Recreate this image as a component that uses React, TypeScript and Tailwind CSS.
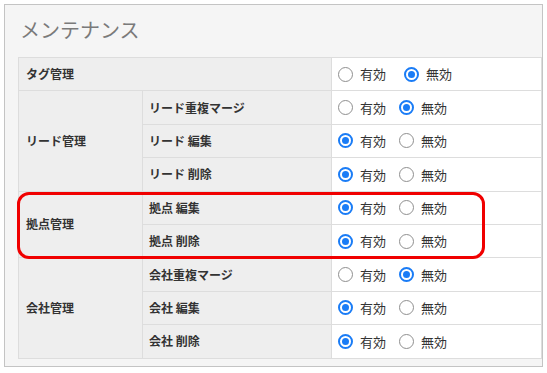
import React, { useState } from 'react';

type Row = { group: string; label?: string; span?: number; on: boolean; wide?: boolean };

const rows: Row[] = [
  { group: 'タグ管理', on: false, wide: true },
  { group: 'リード管理', label: 'リード重複マージ', span: 3, on: false },
  { group: 'リード管理', label: 'リード 編集', on: true },
  { group: 'リード管理', label: 'リード 削除', on: true },
  { group: '拠点管理', label: '拠点 編集', span: 2, on: true },
  { group: '拠点管理', label: '拠点 削除', on: true },
  { group: '会社管理', label: '会社重複マージ', span: 3, on: false },
  { group: '会社管理', label: '会社 編集', on: true },
  { group: '会社管理', label: '会社 削除', on: true },
];

function Radio({ checked, onClick }: { checked: boolean; onClick: () => void }) {
  return (
    <span
      onClick={onClick}
      className={
        checked
          ? 'flex h-[15px] w-[15px] items-center justify-center rounded-full border-2 border-[#1a7cf6] bg-white'
          : 'flex h-[15px] w-[15px] items-center justify-center rounded-full border border-[#8f8f8f] bg-white'
      }
    >
      {checked && <span className="h-[7px] w-[7px] rounded-full bg-[#1a7cf6]" />}
    </span>
  );
}

function Toggle({ initial, wide }: { initial: boolean; wide?: boolean }) {
  const [on, setOn] = useState(initial);
  return (
    <div className="flex items-center pl-[6px] text-[13px] text-[#333]">
      <Radio checked={on} onClick={() => setOn(true)} />
      <span className="ml-[7px]">有効</span>
      <span className={wide ? 'ml-[18px]' : 'ml-[13px]'}>
        <Radio checked={!on} onClick={() => setOn(false)} />
      </span>
      <span className="ml-[7px]">無効</span>
    </div>
  );
}

export default function App() {
  const cell = 'border border-[#dddddd] bg-[#eeeeee] px-[7px] text-[12px] font-bold text-[#333]';
  return (
    <div className="bg-white pt-[4px] pl-[4px]" style={{ fontFamily: '"Noto Sans CJK JP", "Noto Sans", sans-serif' }}>
      <div className="h-[363px] w-[539px] overflow-hidden border border-[#c4c4c4] bg-[#f5f5f5]">
        <h1 className="pl-[15px] pt-[10px] text-[20px] leading-[30px] font-normal text-[#7a7a7a]">メンテナンス</h1>
        <div className="relative mt-[12px] ml-[13px]">
          <table className="w-[524px] border-collapse table-fixed">
            <colgroup>
              <col className="w-[124px]" />
              <col className="w-[189px]" />
              <col />
            </colgroup>
            <tbody>
              {rows.map((r, i) => (
                <tr key={i} className="h-[33.4px]">
                  {!r.label && (
                    <td colSpan={2} className={cell}>
                      {r.group}
                    </td>
                  )}
                  {r.label && r.span && (
                    <td rowSpan={r.span} className={cell}>
                      {r.group}
                    </td>
                  )}
                  {r.label && <td className={cell + ' pl-[6px]'}>{r.label}</td>}
                  <td className="border border-[#dddddd] bg-white p-0">
                    <Toggle initial={r.on} wide={r.wide} />
                  </td>
                </tr>
              ))}
            </tbody>
          </table>
          <div className="absolute left-[-1px] top-[135px] h-[67px] w-[468px] rounded-[12px] border-[3px] border-[#f00000]" />
        </div>
      </div>
    </div>
  );
}
